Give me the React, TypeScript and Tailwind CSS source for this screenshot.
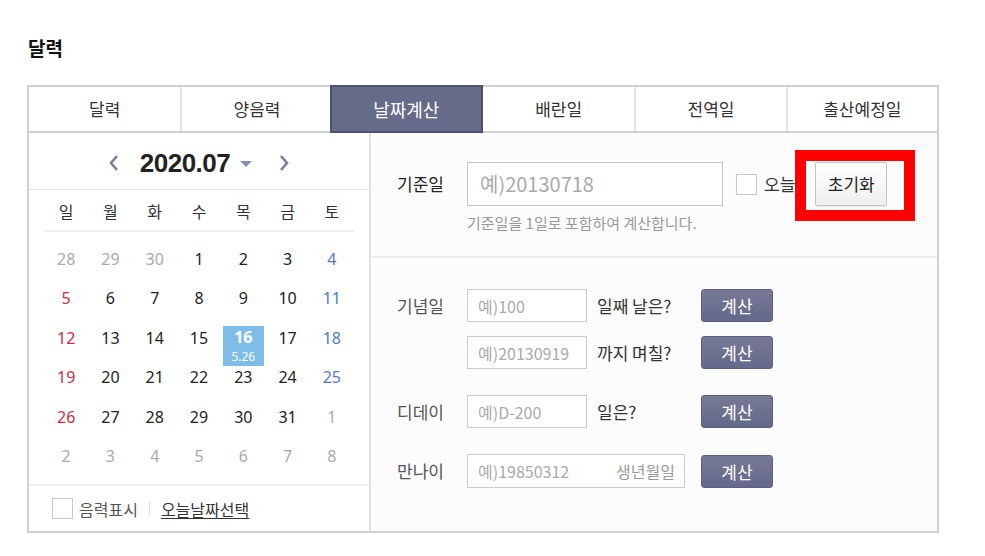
import React from "react";

const tabs = ["달력", "양음력", "날짜계산", "배란일", "전역일", "출산예정일"];
const weekdays = ["일", "월", "화", "수", "목", "금", "토"];

type Day = { n: number; muted?: boolean };
const weeks: Day[][] = [
  [{ n: 28, muted: true }, { n: 29, muted: true }, { n: 30, muted: true }, { n: 1 }, { n: 2 }, { n: 3 }, { n: 4 }],
  [{ n: 5 }, { n: 6 }, { n: 7 }, { n: 8 }, { n: 9 }, { n: 10 }, { n: 11 }],
  [{ n: 12 }, { n: 13 }, { n: 14 }, { n: 15 }, { n: 16 }, { n: 17 }, { n: 18 }],
  [{ n: 19 }, { n: 20 }, { n: 21 }, { n: 22 }, { n: 23 }, { n: 24 }, { n: 25 }],
  [{ n: 26 }, { n: 27 }, { n: 28 }, { n: 29 }, { n: 30 }, { n: 31 }, { n: 1, muted: true }],
  [2, 3, 4, 5, 6, 7, 8].map((n) => ({ n, muted: true })),
];

const ko = { fontFamily: '"Noto Sans CJK KR", "Noto Sans", sans-serif' };
const num = { fontFamily: '"Noto Sans", "Noto Sans CJK KR", sans-serif' };

function dayColor(d: Day, col: number) {
  if (d.muted) return "text-[#aaaaaa]";
  if (col === 0) return "text-[#c9303e]";
  if (col === 6) return "text-[#5279c6]";
  return "text-[#222222]";
}

function CalcButton() {
  return (
    <button className="h-[33px] w-[72px] rounded-[3px] border border-[#5d6180] bg-gradient-to-b from-[#767a96] to-[#65698a] text-[17px] leading-none text-white">
      계산
    </button>
  );
}

function SmallInput({ placeholder, w = "w-[120px]" }: { placeholder: string; w?: string }) {
  return (
    <div className={`flex h-[33px] ${w} items-center border border-[#cccccc] bg-white pl-[10px] text-[16px] text-[#aaaaaa]`}>
      {placeholder}
    </div>
  );
}

function Calendar() {
  return (
    <div className="flex w-[340px] flex-col">
      <div className="flex h-[57px] items-center justify-center border-b border-[#e6e6e6] pt-[4px]">
        <svg width="12" height="20" viewBox="0 0 12 20" className="mr-[20px]">
          <path d="M9 3 L3 10 L9 17" fill="none" stroke="#7a80a0" strokeWidth="2.6" />
        </svg>
        <span className="text-[26px] font-bold leading-[30px] tracking-[-0.5px] text-[#222]" style={{ fontFamily: '"Liberation Sans", Arial, sans-serif' }}>
          2020.07
        </span>
        <svg width="14" height="8" viewBox="0 0 14 8" className="ml-[9px] mr-[25px] mt-[2px]">
          <path d="M1 1 L13 1 L7 7 Z" fill="#8a90aa" />
        </svg>
        <svg width="12" height="20" viewBox="0 0 12 20">
          <path d="M3 3 L9 10 L3 17" fill="none" stroke="#7a80a0" strokeWidth="2.6" />
        </svg>
      </div>
      <div className="mx-[15px] grid h-[42px] grid-cols-7 items-center border-b-2 border-[#eeeeee] pt-[2px] text-[16px] text-[#333]" style={ko}>
        {weekdays.map((w) => (
          <div key={w} className="text-center">{w}</div>
        ))}
      </div>
      <div className="mx-[15px] pt-[7px] pb-[8px]" style={num}>
        {weeks.map((wk, r) => (
          <div key={r} className="grid h-[39.5px] grid-cols-7">
            {wk.map((d, c) =>
              r === 2 && c === 4 ? (
                <div key={c} className="flex h-[39.5px] items-start justify-center pt-[8px]">
                  <div className="flex h-[40px] w-[41px] shrink-0 flex-col items-center bg-[#7dbde8] text-white">
                    <span className="text-[16px] font-bold leading-[22px]">16</span>
                    <span className="text-[12px] leading-[17px]">5.26</span>
                  </div>
                </div>
              ) : (
                <div key={c} className={`flex h-[39.5px] items-center justify-center text-[16px] ${dayColor(d, c)}`}>
                  {d.n}
                </div>
              )
            )}
          </div>
        ))}
      </div>
      <div className="flex flex-1 items-center border-t-2 border-[#eeeeee] pl-[23px]" style={ko}>
        <div className="h-[21px] w-[21px] border border-[#c8c8c8] bg-white" />
        <span className="ml-[6px] text-[16px] text-[#555]">음력표시</span>
        <span className="mx-[11px] h-[13px] w-px bg-[#dddddd]" />
        <span className="text-[16px] text-[#333] underline underline-offset-2">오늘날짜선택</span>
      </div>
    </div>
  );
}

function Calculator() {
  return (
    <div className="flex flex-1 flex-col border-l-2 border-[#e2e2e2] bg-[#fcfcfc]" style={ko}>
      <div className="border-b-2 border-[#eeeeee] pb-[22px] pl-[26px] pt-[29px]">
        <div className="flex items-center">
          <span className="w-[70px] text-[17px] text-[#222]">기준일</span>
          <div className="flex h-[44px] w-[256px] items-center border border-[#c6c6c6] bg-white pl-[12px] text-[20px] text-[#aaaaaa]">
            예)20130718
          </div>
          <div className="ml-[13px] h-[21px] w-[21px] border border-[#c8c8c8] bg-white" />
          <span className="ml-[7px] text-[17px] text-[#333]">오늘</span>
          <button className="ml-[20px] h-[44px] w-[72px] rounded-[2px] border border-[#c4c4c4] bg-gradient-to-b from-white to-[#efefef] text-[17px] text-[#222] shadow-[0_1px_1px_rgba(0,0,0,0.1)]">
            초기화
          </button>
        </div>
        <div className="ml-[70px] mt-[6px] text-[15px] leading-[22px] text-[#999999]">기준일을 1일로 포함하여 계산합니다.</div>
      </div>
      <div className="flex flex-col pl-[26px] pt-[31px]">
        <div className="flex items-center">
          <span className="w-[70px] text-[17px] text-[#555]">기념일</span>
          <div className="flex w-[234px] items-center">
            <SmallInput placeholder="예)100" />
            <span className="ml-[10px] text-[17px] text-[#333]">일째 날은?</span>
          </div>
          <CalcButton />
        </div>
        <div className="mt-[14px] flex items-center">
          <span className="w-[70px]" />
          <div className="flex w-[234px] items-center">
            <SmallInput placeholder="예)20130919" />
            <span className="ml-[10px] text-[17px] text-[#333]">까지 며칠?</span>
          </div>
          <CalcButton />
        </div>
        <div className="mt-[26px] flex items-center">
          <span className="w-[70px] text-[17px] text-[#555]">디데이</span>
          <div className="flex w-[234px] items-center">
            <SmallInput placeholder="예)D-200" />
            <span className="ml-[10px] text-[17px] text-[#333]">일은?</span>
          </div>
          <CalcButton />
        </div>
        <div className="mt-[26px] flex items-center">
          <span className="w-[70px] text-[17px] text-[#555]">만나이</span>
          <div className="flex w-[234px] items-center">
            <div className="flex h-[34px] w-[218px] items-center justify-between border border-[#cccccc] bg-white pl-[10px] pr-[9px] text-[16px] text-[#aaaaaa]">
              <span>예)19850312</span>
              <span className="text-[#999]">생년월일</span>
            </div>
          </div>
          <CalcButton />
        </div>
      </div>
    </div>
  );
}

export default function App() {
  return (
    <div className="relative h-[556px] w-[985px] overflow-hidden bg-white" style={ko}>
      <div className="pl-[27px] pt-[35px]">
        <h1 className="pl-[1px] text-[19px] font-semibold leading-[26px] text-[#111]">달력</h1>
        <div className="mt-[24px] w-[912px] border-2 border-[#d0d0d0]">
          <div className="grid h-[46px] grid-cols-6 border-b-2 border-[#d0d0d0]">
            {tabs.map((t, i) =>
              i === 2 ? (
                <div key={t} className="-mb-[2px] -ml-[2px] -mt-[2px] flex items-center justify-center border-2 border-[#4d5272] bg-[#666b8a] text-[18px] text-white">
                  {t}
                </div>
              ) : (
                <div
                  key={t}
                  className={`flex items-center justify-center text-[17px] text-[#333] ${i === 0 || i === 3 ? "" : "border-l-2 border-[#e4e4e4]"}`}
                >
                  {t}
                </div>
              )
            )}
          </div>
          <div className="flex h-[398px]">
            <Calendar />
            <Calculator />
          </div>
        </div>
      </div>
      <div className="absolute left-[795px] top-[150px] h-[71px] w-[120px] border-[11px] border-[#ff0000]" />
    </div>
  );
}
